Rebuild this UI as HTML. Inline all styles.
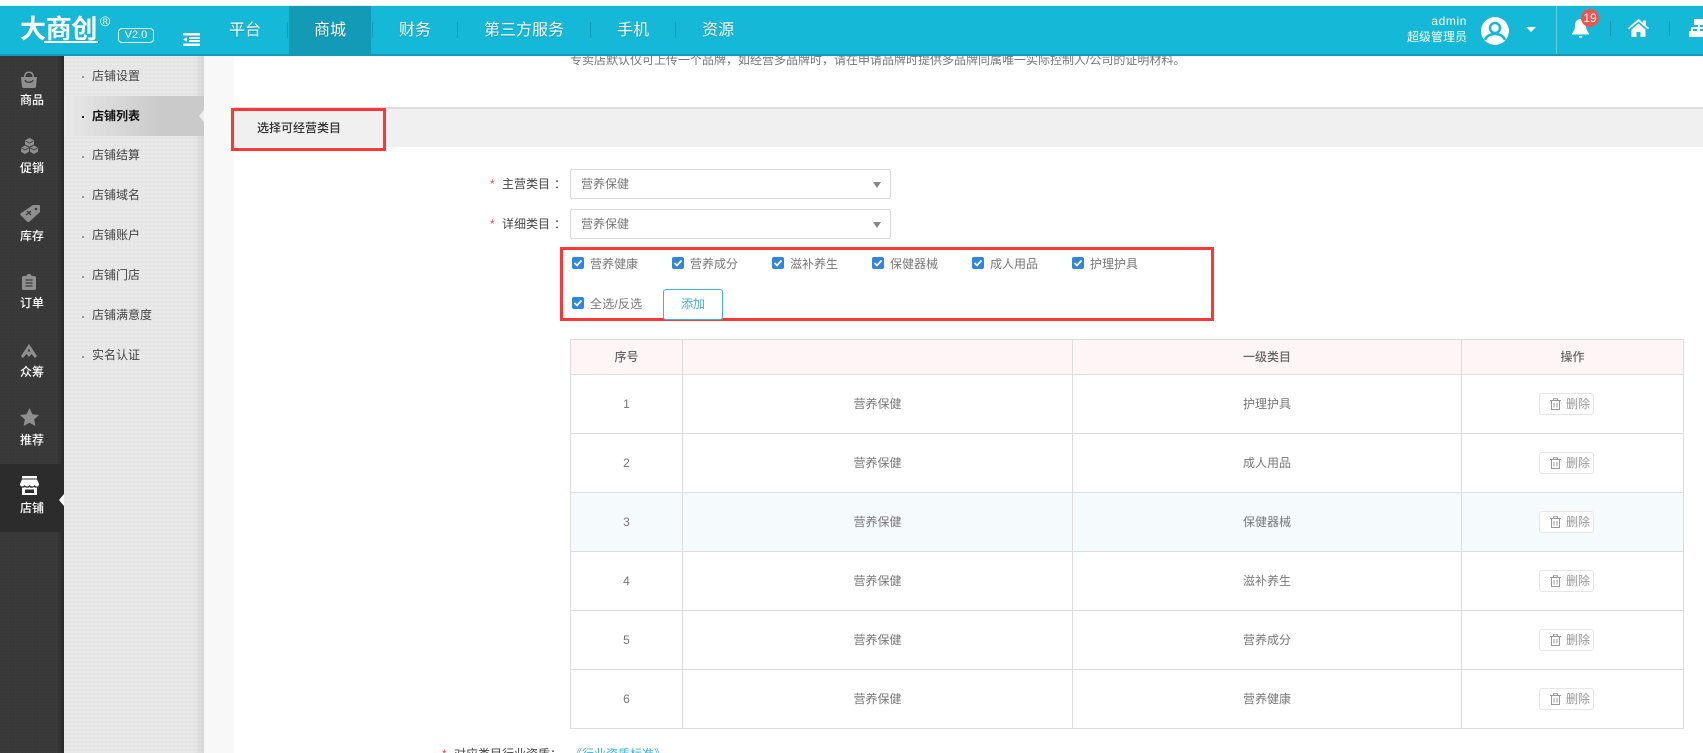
<!DOCTYPE html>
<html lang="zh"><head><meta charset="utf-8"><title>店铺列表</title>
<style>
*{box-sizing:border-box;margin:0;padding:0}
html,body{width:1703px;height:753px;overflow:hidden;background:#fff}
body{position:relative;font-family:"Liberation Sans","Noto Sans CJK SC",sans-serif;font-size:12px;color:#666}
.a{position:absolute;white-space:nowrap}
#top{position:absolute;left:0;top:5px;width:1703px;height:51px;background:#16b8d8;border-top:1px solid #dff3f7;border-bottom:2px solid #129ab6;z-index:5}
.nav{position:absolute;top:21px;line-height:20px;font-size:16px;color:#fff;white-space:nowrap;text-shadow:0 1px 1px rgba(0,0,0,.18);z-index:6}
.sep{position:absolute;width:1px;background:#129ab6;z-index:6}
#side{position:absolute;left:0;top:56px;width:64px;height:697px;background-color:#3a3a3a;background-image:linear-gradient(90deg,rgba(0,0,0,0) 88%,rgba(0,0,0,.28)),radial-gradient(#373737 1px,transparent 1px);background-size:100% 100%,3px 3px}
.sl{position:absolute;left:0;width:64px;text-align:center;color:#fff;font-size:12px;line-height:16px;font-weight:500}
#sub{position:absolute;left:64px;top:56px;width:140px;height:697px;background-color:#e8e8e8;background-image:linear-gradient(90deg,rgba(0,0,0,0) 92%,rgba(0,0,0,.07)),radial-gradient(#e3e3e3 1px,transparent 1.2px);background-size:100% 100%,4px 4px}
.it{position:absolute;left:92px;line-height:16px;color:#444;white-space:nowrap}
.dot{position:absolute;left:82px;width:2px;height:2px;background:#999}
#main{position:absolute;left:204px;top:56px;width:30px;height:697px;background:#f8f8f8}
.lbl{position:absolute;line-height:16px;color:#444;white-space:nowrap}
.star{color:#f04848}
.sel{position:absolute;left:570px;width:321px;height:30px;border:1px solid #ddd;border-radius:2px;line-height:28px;padding-left:10px;color:#777;background:#fff}
.sel i{position:absolute;right:9px;top:12px;width:0;height:0;border-left:4.500px solid transparent;border-right:4.500px solid transparent;border-top:6px solid #888}
.cb{position:absolute;width:12px;height:12px;border-radius:2px;background:#2e86de}
.cb svg{position:absolute;left:0;top:0}
.cbt{position:absolute;line-height:16px;color:#777;white-space:nowrap}
.red{position:absolute;border:3px solid #ff3636;z-index:3}
table{position:absolute;left:570px;top:339px;width:1113px;height:389px;border-collapse:collapse;table-layout:fixed}
td,th{border:1px solid #ddd;text-align:center;font-weight:400;color:#777;font-size:12px;padding:0}
th{height:35px;background:#fef5f7;font-weight:500;color:#666;padding-bottom:2px}
td{height:59px;background:#fff}
td+td{padding-bottom:2px}
tr.hl td{background:#f5fafd}
.del{display:inline-block;width:55px;height:22px;border:1px solid #e6e6e6;border-radius:3px;line-height:20px;color:#999;position:relative;left:-6px;top:1px;background:#fff;padding-left:10px;text-align:left}
.del svg{vertical-align:-2px;margin-right:5px}
</style></head><body>

<div id="top"></div>
<div class="a" style="left:20px;top:12px;line-height:34px;font-size:26px;font-weight:700;color:#fff;letter-spacing:-.3px;z-index:6;">大商创</div>
<div style="position:absolute;left:44px;top:41px;width:54px;height:2px;background:#fff;z-index:6"></div>
<div class="a" style="left:100px;top:13px;font-size:14px;line-height:16px;color:#fff;z-index:6">®</div>
<div class="a" style="left:118px;top:28px;width:36px;height:15px;border:1px solid #e8f8fb;border-radius:4px;text-align:center;font-size:11px;line-height:13px;color:#fff;z-index:6">V2.0</div>
<svg style="position:absolute;left:183px;top:33px;z-index:6" width="17" height="13" viewBox="0 0 17 13"><path fill="#fff" d="M0 0h17v2.500H0zM6 4h11v2H6zM6 7h11v2H6zM0 10.500h17V13H0zM4 4.200v4.600L0 6.500z"/></svg>

<div style="position:absolute;left:289px;top:6px;width:82px;height:48px;background:#129ab6;z-index:6"></div>
<div class="nav" style="left:229px">平台</div>
<div class="nav" style="left:314px">商城</div>
<div class="nav" style="left:399px">财务</div>
<div class="nav" style="left:484px">第三方服务</div>
<div class="nav" style="left:617px">手机</div>
<div class="nav" style="left:702px">资源</div>
<div class="sep" style="left:287px;top:22px;height:16px"></div>
<div class="sep" style="left:372px;top:22px;height:16px"></div>
<div class="sep" style="left:457px;top:22px;height:16px"></div>
<div class="sep" style="left:590px;top:22px;height:16px"></div>
<div class="sep" style="left:675px;top:22px;height:16px"></div>

<div class="a" style="right:236px;top:14px;line-height:15px;text-align:right;color:#fff;z-index:6;letter-spacing:.6px">admin</div>
<div class="a" style="right:236px;top:29px;line-height:16px;text-align:right;color:#fff;z-index:6">超级管理员</div>
<svg style="position:absolute;left:1481px;top:17px;z-index:6" width="28" height="28" viewBox="0 0 28 28"><circle cx="14" cy="14" r="14" fill="#fff"/><circle cx="14" cy="11" r="5" fill="none" stroke="#16b8d8" stroke-width="2.500"/><path d="M4 23c2-5 6-6 10-6s8 1 10 6" fill="none" stroke="#16b8d8" stroke-width="2.500"/></svg>
<div style="position:absolute;left:1526px;top:27px;width:0;height:0;border-left:5px solid transparent;border-right:5px solid transparent;border-top:5px solid #fff;z-index:6"></div>
<div style="position:absolute;left:1556px;top:6px;width:1px;height:48px;background:#5fd0e6;z-index:6"></div>
<svg style="position:absolute;left:1572px;top:19px;z-index:6" width="17" height="20" viewBox="0 0 17 20"><path fill="#fff" d="M8.500 0C5 0 3 3 3 6.500 3 10 2 12 0 14.500V15.500h17v-1c-2-2.500-3-4.500-3-8C14 3 12 0 8.500 0zM6.500 17h4l-1 1.800h-2z"/></svg>
<div style="position:absolute;left:1581px;top:9px;width:18px;height:18px;border-radius:50%;background:#ef5350;color:#fff;text-align:center;line-height:18px;font-size:12px;z-index:7">19</div>
<div class="sep" style="left:1610px;top:21px;height:15px"></div>
<svg style="position:absolute;left:1628px;top:19px;z-index:6" width="21" height="18" viewBox="0 0 21 18"><path fill="#fff" d="M10.500 0 0 9l1.200 1.300L10.500 2.500l9.300 7.800L21 9l-3-2.600V1.500h-3v2.300zM3.500 10.500V18h5v-5h4v5h5v-7.500l-7-6z"/></svg>
<div class="sep" style="left:1669px;top:21px;height:15px"></div>
<svg style="position:absolute;left:1689px;top:19px;z-index:6" width="20" height="18" viewBox="0 0 20 18"><path fill="#fff" d="M5 0h10v6h-4v2h6v4h3v6h-7v-6h2V10h-4v2h2v6H6v-6h2v-2H4v2h2v6H0v-6h2V8h7V6H5z"/></svg>

<div id="side"></div>
<div style="position:absolute;left:0;top:464px;width:64px;height:68px;background:#2c2c2c"></div>

<svg style="position:absolute;left:21px;top:71px" width="16" height="17" viewBox="0 0 16 17"><path fill="#8f8f8f" d="M3 6C3 2 5 .5 8 .5S13 2 13 6h-1.500C11.500 3 10 2 8 2S4.500 3 4.500 6zM0 6h16l-1 9.500c0 1-1 1.500-2 1.500H3c-1 0-2-.5-2-1.500z"/><path d="M4 9c1 3 7 3 8 0" stroke="#3a3a3a" stroke-width="1.300" fill="none"/></svg>
<div class="sl" style="top:92px">商品</div>
<svg style="position:absolute;left:21px;top:138px" width="17" height="16" viewBox="0 0 17 16"><path fill="#8f8f8f" d="M8.500 0 13 2.300v4.200L8.500 8.800 4 6.500V2.300zM4 7.500l4 2.200v4L4 16 0 13.700V9.700zM13 7.500l4 2.200v4L13 16l-4-2.300v-4z"/><path d="M4.500 2.800 8.500 5l4-2.200M0.500 10l3.500 2 3.500-2M9.500 10l3.500 2 3.500-2" stroke="#3a3a3a" stroke-width=".8" fill="none"/></svg>
<div class="sl" style="top:160px">促销</div>
<svg style="position:absolute;left:20px;top:205px" width="20" height="17" viewBox="0 0 20 17"><path fill="#8f8f8f" d="M13 0h6c.6 0 1 .4 1 1v6L9 17c-.5.400-1 .400-1.500 0L.5 10c-.4-.5-.4-1 0-1.500z"/><circle cx="16" cy="4" r="1.300" fill="#3a3a3a"/><path d="M6 10l5-4M7 6l4 4" stroke="#3a3a3a" stroke-width="1.300"/></svg>
<div class="sl" style="top:228px">库存</div>
<svg style="position:absolute;left:22px;top:274px" width="14" height="16" viewBox="0 0 14 16"><path fill="#8f8f8f" d="M1.500 2H4.500C4.500 .8 5.500 0 7 0s2.500.8 2.500 2h3c.8 0 1.500.7 1.500 1.500V14.500c0 .8-.7 1.500-1.500 1.500h-11C.7 16 0 15.300 0 14.500V3.500C0 2.700.7 2 1.500 2z"/><path d="M3.500 6h7M3.500 9h7M3.500 12h7" stroke="#3a3a3a" stroke-width="1.200"/></svg>
<div class="sl" style="top:295px">订单</div>
<svg style="position:absolute;left:21px;top:344px" width="16" height="14" viewBox="0 0 16 14"><path fill="#8f8f8f" d="M8 0l8 12-2 2-3.500-4L8 13 5.500 10 2 14l-2-2zM8 4.500 6.500 7.500h3z"/></svg>
<div class="sl" style="top:364px">众筹</div>
<svg style="position:absolute;left:20px;top:408px" width="19" height="18" viewBox="0 0 19 18"><path fill="#8f8f8f" d="M9.500 0l2.900 6.200 6.600.8-4.900 4.500 1.300 6.500-5.900-3.300L3.600 18l1.300-6.500L0 7l6.600-.8z"/></svg>
<div class="sl" style="top:432px">推荐</div>
<svg style="position:absolute;left:20px;top:476px" width="19" height="19" viewBox="0 0 19 19"><path fill="#fff" d="M2 0h15v2.500H2zM2 3.500h15L19 8c0 1.500-1 2.500-2 2.500-1 0-2-.7-2.300-1.500-.4.800-1.300 1.500-2.400 1.500S10 9.800 9.500 9c-.5.800-1.300 1.500-2.400 1.500S5.100 9.800 4.700 9C4.400 9.800 3 10.500 2 10.500 1 10.500 0 9.500 0 8zM2 11.500c1.500.3 2.300 0 3-.5.600.5 1.500.8 2.400.8s1.500-.3 2.100-.8c.6.500 1.300.8 2.100.8s1.800-.3 2.400-.8c.7.500 1.500.8 3 .5V19H2z"/><path fill="#2c2c2c" d="M5 13.500h9V17H5z"/></svg>
<div class="sl" style="top:500px">店铺</div>
<div style="position:absolute;left:59px;top:494px;width:0;height:0;border-top:6px solid transparent;border-bottom:6px solid transparent;border-right:5px solid #fff"></div>

<div id="sub"></div>
<div style="position:absolute;left:64px;top:96px;width:140px;height:40px;background:linear-gradient(90deg,#e8e8e8,#cacaca 70%)"></div>
<div style="position:absolute;left:199px;top:110px;width:0;height:0;border-top:6px solid transparent;border-bottom:6px solid transparent;border-right:5px solid #eee"></div>
<div class="dot" style="top:76px"></div><div class="it" style="top:68px">店铺设置</div>
<div class="dot" style="top:116px;background:#222"></div><div class="it" style="top:108px;font-weight:700;color:#111">店铺列表</div>
<div class="dot" style="top:156px"></div><div class="it" style="top:147px">店铺结算</div>
<div class="dot" style="top:196px"></div><div class="it" style="top:187px">店铺域名</div>
<div class="dot" style="top:236px"></div><div class="it" style="top:227px">店铺账户</div>
<div class="dot" style="top:276px"></div><div class="it" style="top:267px">店铺门店</div>
<div class="dot" style="top:316px"></div><div class="it" style="top:307px">店铺满意度</div>
<div class="dot" style="top:356px"></div><div class="it" style="top:347px">实名认证</div>

<div id="main"></div>

<div class="a" style="left:570px;top:52px;line-height:16px;color:#777">专卖店默认仅可上传一个品牌，如经营多品牌时，请在申请品牌时提供多品牌同属唯一实际控制人/公司的证明材料。</div>
<div id="top2" style="position:absolute;left:0;top:0;width:1703px;height:5px;background:#fff;z-index:5"></div>

<div style="position:absolute;left:234px;top:107px;width:1469px;height:40px;background:#f0f0f0;border-top:2px solid #ddd"></div>
<div class="a" style="left:257px;top:120px;line-height:16px;color:#333;font-weight:500">选择可经营类目</div>
<div class="red" style="left:231px;top:108px;width:155px;height:43px"></div>

<div class="lbl" style="left:490px;top:176px"><span class="star">*</span></div>
<div class="lbl" style="left:502px;top:176px">主营类目<span style="margin-left:4px">：</span></div>
<div class="sel" style="top:169px">营养保健<i></i></div>
<div class="lbl" style="left:490px;top:216px"><span class="star">*</span></div>
<div class="lbl" style="left:502px;top:216px">详细类目<span style="margin-left:4px">：</span></div>
<div class="sel" style="top:209px">营养保健<i></i></div>

<div class="red" style="left:560px;top:247px;width:654px;height:74px"></div>
<div class="cb" style="left:572px;top:257px"><svg width="12" height="12" viewBox="0 0 12 12"><path d="M2.500 6l2.500 2.500 4.500-5" fill="none" stroke="#fff" stroke-width="1.800"/></svg></div><div class="cbt" style="left:590px;top:256px">营养健康</div>
<div class="cb" style="left:672px;top:257px"><svg width="12" height="12" viewBox="0 0 12 12"><path d="M2.500 6l2.500 2.500 4.500-5" fill="none" stroke="#fff" stroke-width="1.800"/></svg></div><div class="cbt" style="left:690px;top:256px">营养成分</div>
<div class="cb" style="left:772px;top:257px"><svg width="12" height="12" viewBox="0 0 12 12"><path d="M2.500 6l2.500 2.500 4.500-5" fill="none" stroke="#fff" stroke-width="1.800"/></svg></div><div class="cbt" style="left:790px;top:256px">滋补养生</div>
<div class="cb" style="left:872px;top:257px"><svg width="12" height="12" viewBox="0 0 12 12"><path d="M2.500 6l2.500 2.500 4.500-5" fill="none" stroke="#fff" stroke-width="1.800"/></svg></div><div class="cbt" style="left:890px;top:256px">保健器械</div>
<div class="cb" style="left:972px;top:257px"><svg width="12" height="12" viewBox="0 0 12 12"><path d="M2.500 6l2.500 2.500 4.500-5" fill="none" stroke="#fff" stroke-width="1.800"/></svg></div><div class="cbt" style="left:990px;top:256px">成人用品</div>
<div class="cb" style="left:1072px;top:257px"><svg width="12" height="12" viewBox="0 0 12 12"><path d="M2.500 6l2.500 2.500 4.500-5" fill="none" stroke="#fff" stroke-width="1.800"/></svg></div><div class="cbt" style="left:1090px;top:256px">护理护具</div>
<div class="cb" style="left:572px;top:297px"><svg width="12" height="12" viewBox="0 0 12 12"><path d="M2.500 6l2.500 2.500 4.500-5" fill="none" stroke="#fff" stroke-width="1.800"/></svg></div><div class="cbt" style="left:590px;top:296px;letter-spacing:.2px">全选/反选</div>
<div class="a" style="left:663px;top:289px;width:60px;height:31px;border:1px solid #3cb4dc;border-radius:3px;text-align:center;line-height:29px;color:#3cb4dc;background:#fff;z-index:4">添加</div>

<table>
<colgroup><col style="width:112px"><col style="width:390px"><col style="width:389px"><col style="width:222px"></colgroup>
<tr><th>序号</th><th></th><th>一级类目</th><th>操作</th></tr>
<tr><td>1</td><td>营养保健</td><td>护理护具</td><td><span class="del"><svg width="11" height="12" viewBox="0 0 11 12"><path d="M1.500 3v8.500h8V3M0 2.500h11M3.500 2.500V.7h4v1.800M4 5v4.500M7 5v4.500" fill="none" stroke="#999"/></svg>删除</span></td></tr>
<tr><td>2</td><td>营养保健</td><td>成人用品</td><td><span class="del"><svg width="11" height="12" viewBox="0 0 11 12"><path d="M1.500 3v8.500h8V3M0 2.500h11M3.500 2.500V.7h4v1.800M4 5v4.500M7 5v4.500" fill="none" stroke="#999"/></svg>删除</span></td></tr>
<tr class="hl"><td>3</td><td>营养保健</td><td>保健器械</td><td><span class="del"><svg width="11" height="12" viewBox="0 0 11 12"><path d="M1.500 3v8.500h8V3M0 2.500h11M3.500 2.500V.7h4v1.800M4 5v4.500M7 5v4.500" fill="none" stroke="#999"/></svg>删除</span></td></tr>
<tr><td>4</td><td>营养保健</td><td>滋补养生</td><td><span class="del"><svg width="11" height="12" viewBox="0 0 11 12"><path d="M1.500 3v8.500h8V3M0 2.500h11M3.500 2.500V.7h4v1.800M4 5v4.500M7 5v4.500" fill="none" stroke="#999"/></svg>删除</span></td></tr>
<tr><td>5</td><td>营养保健</td><td>营养成分</td><td><span class="del"><svg width="11" height="12" viewBox="0 0 11 12"><path d="M1.500 3v8.500h8V3M0 2.500h11M3.500 2.500V.7h4v1.800M4 5v4.500M7 5v4.500" fill="none" stroke="#999"/></svg>删除</span></td></tr>
<tr><td>6</td><td>营养保健</td><td>营养健康</td><td><span class="del"><svg width="11" height="12" viewBox="0 0 11 12"><path d="M1.500 3v8.500h8V3M0 2.500h11M3.500 2.500V.7h4v1.800M4 5v4.500M7 5v4.500" fill="none" stroke="#999"/></svg>删除</span></td></tr>
</table>

<div class="lbl" style="left:442px;top:746px"><span class="star">*</span></div>
<div class="lbl" style="left:454px;top:746px">对应类目行业资质：</div>
<div class="lbl" style="left:570px;top:746px;color:#3cb4dc">《行业资质标准》</div>

</body></html>
